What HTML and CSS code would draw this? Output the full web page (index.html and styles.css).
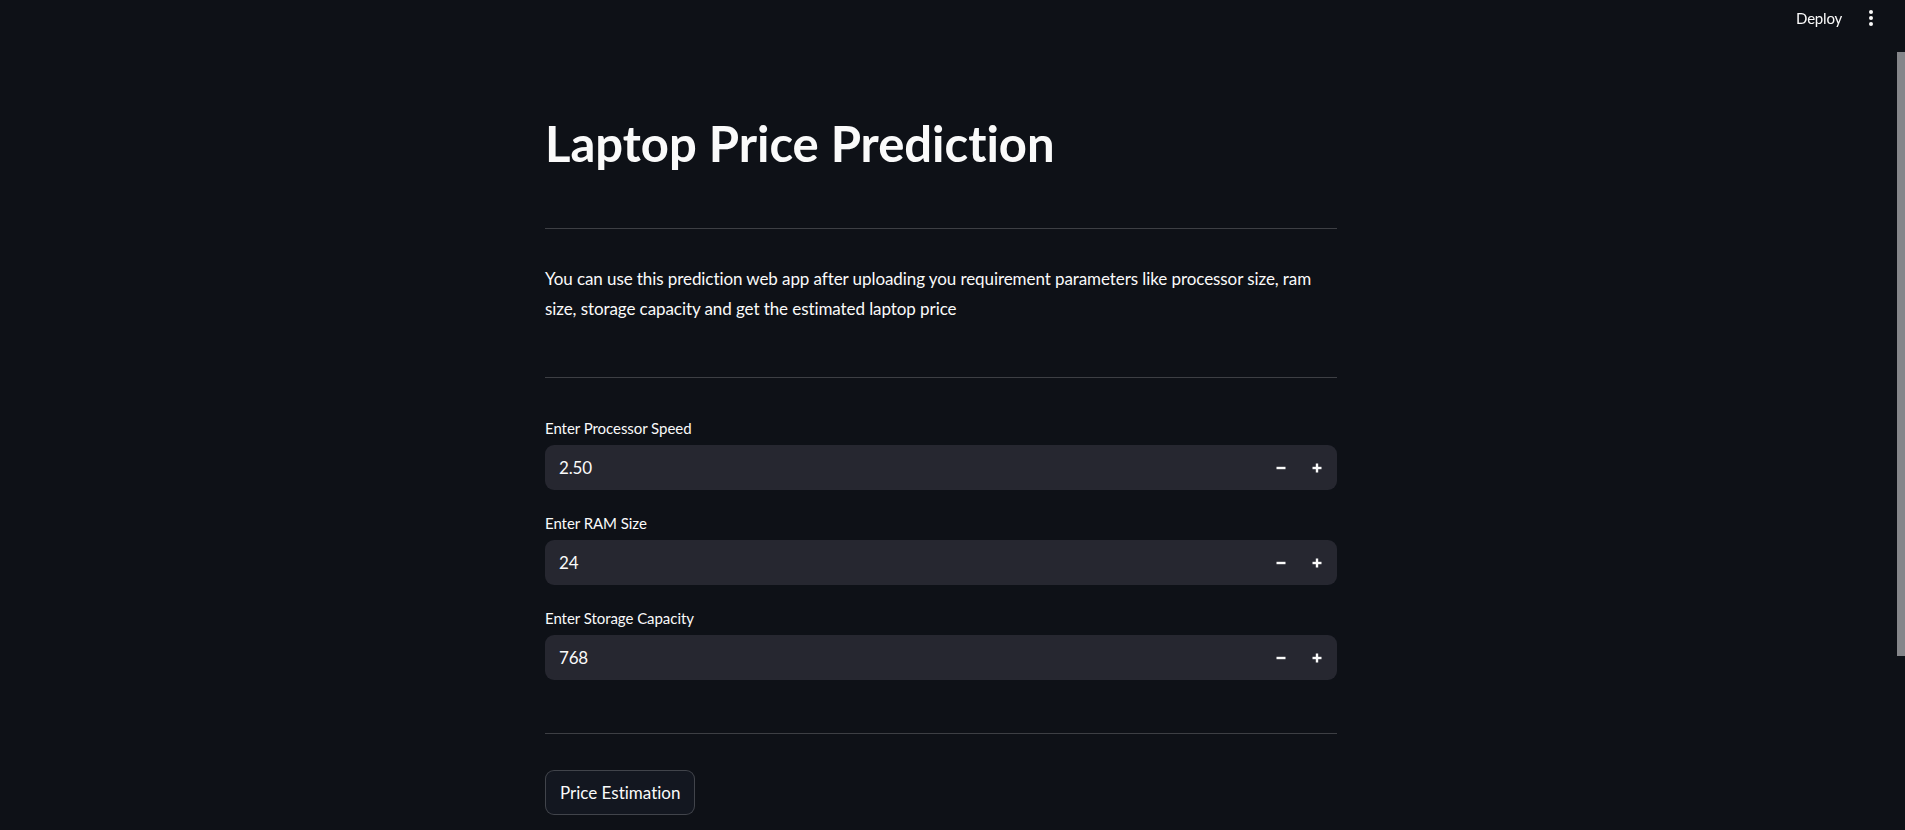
FILE: index.html
```html
<!DOCTYPE html>
<html lang="en">
<head>
<meta charset="utf-8">
<title>Laptop Price Prediction</title>
<link rel="stylesheet" href="styles.css">
</head>
<body>
<div class="app">
  <header class="topbar">
    <span class="deploy">Deploy</span>
    <button class="menu" aria-label="Main menu">
      <svg width="4" height="16" viewBox="0 0 4 16"><circle cx="2" cy="2" r="2" fill="#fafafa"/><circle cx="2" cy="8" r="2" fill="#fafafa"/><circle cx="2" cy="14" r="2" fill="#fafafa"/></svg>
    </button>
  </header>
  <main class="block">
    <h1 class="title">Laptop Price Prediction</h1>
    <hr class="divider d1">
    <p class="intro">You can use this prediction web app after uploading you requirement parameters like processor size, ram size, storage capacity and get the estimated laptop price</p>
    <hr class="divider d2">
    <div class="fields">
      <div class="field">
        <label class="label">Enter Processor Speed</label>
        <div class="numinput">
          <span class="value">2.50</span>
          <button class="step" aria-label="Decrement"><svg width="10" height="10" viewBox="0 0 10 10"><rect x="0.5" y="3.8" width="9" height="2.4" fill="#fafafa"/></svg></button>
          <button class="step" aria-label="Increment"><svg width="10" height="10" viewBox="0 0 10 10"><rect x="0.5" y="3.8" width="9" height="2.4" fill="#fafafa"/><rect x="3.8" y="0.5" width="2.4" height="9" fill="#fafafa"/></svg></button>
        </div>
      </div>
      <div class="field">
        <label class="label">Enter RAM Size</label>
        <div class="numinput">
          <span class="value">24</span>
          <button class="step" aria-label="Decrement"><svg width="10" height="10" viewBox="0 0 10 10"><rect x="0.5" y="3.8" width="9" height="2.4" fill="#fafafa"/></svg></button>
          <button class="step" aria-label="Increment"><svg width="10" height="10" viewBox="0 0 10 10"><rect x="0.5" y="3.8" width="9" height="2.4" fill="#fafafa"/><rect x="3.8" y="0.5" width="2.4" height="9" fill="#fafafa"/></svg></button>
        </div>
      </div>
      <div class="field">
        <label class="label">Enter Storage Capacity</label>
        <div class="numinput">
          <span class="value">768</span>
          <button class="step" aria-label="Decrement"><svg width="10" height="10" viewBox="0 0 10 10"><rect x="0.5" y="3.8" width="9" height="2.4" fill="#fafafa"/></svg></button>
          <button class="step" aria-label="Increment"><svg width="10" height="10" viewBox="0 0 10 10"><rect x="0.5" y="3.8" width="9" height="2.4" fill="#fafafa"/><rect x="3.8" y="0.5" width="2.4" height="9" fill="#fafafa"/></svg></button>
        </div>
      </div>
    </div>
    <hr class="divider d3">
    <button class="primary-btn">Price Estimation</button>
  </main>
  <div class="scroll-thumb"></div>
</div>
</body>
</html>
```
FILE: styles.css
```css
* { box-sizing: border-box; }
html, body {
  margin: 0;
  padding: 0;
  height: 100%;
  background: #0e1117;
  overflow: hidden;
}
body {
  color: #fafafa;
  font-family: Lato, "Noto Sans", sans-serif;
  font-variant-ligatures: none;
}
.app {
  height: 830px;
  overflow-y: auto;
  scrollbar-width: none;
  background: #0e1117;
}
.app::-webkit-scrollbar { display: none; }

.scroll-thumb {
  position: fixed;
  top: 52px;
  right: 0;
  width: 8px;
  height: 604px;
  background: #85868a;
  z-index: 6;
}

.topbar {
  position: fixed;
  top: 0;
  left: 0;
  right: 0;
  height: 36px;
  display: flex;
  justify-content: flex-end;
  align-items: center;
  padding-right: 24px;
  gap: 19px;
  background: transparent;
  z-index: 5;
}
.deploy {
  font-size: 15px;
  line-height: 20px;
  color: #fafafa;
  letter-spacing: -0.2px;
}
.menu {
  width: 20px;
  height: 28px;
  padding: 0;
  border: 0;
  background: transparent;
  display: flex;
  align-items: center;
  justify-content: center;
}

.block {
  width: 815px;
  padding: 113px 23px 254px 0;
  margin: 0 auto;
  display: flex;
  flex-direction: column;
  align-items: stretch;
}
.title {
  margin: 0;
  font-size: 49px;
  line-height: 60px;
  font-weight: 700;
  letter-spacing: 0;
}
.divider {
  margin: 0;
  border: 0;
  height: 1px;
  background: rgba(250, 250, 250, 0.2);
}
.d1 { margin-top: 55px; }
.intro {
  margin: 35px 0 0;
  font-size: 17px;
  line-height: 29.5px;
  letter-spacing: -0.08px;
}
.d2 { margin-top: 54px; }
.fields {
  margin-top: 40px;
  display: flex;
  flex-direction: column;
  gap: 23px;
}
.field {
  display: flex;
  flex-direction: column;
  gap: 6px;
}
.label {
  font-size: 15px;
  line-height: 21px;
  letter-spacing: -0.05px;
}
.numinput {
  height: 45px;
  border-radius: 9px;
  background: #262730;
  display: flex;
  align-items: center;
  padding: 0 2px 0 14px;
}
.value {
  flex: 1;
  font-size: 17px;
  line-height: 45px;
  letter-spacing: -0.2px;
}
.step {
  width: 36px;
  height: 45px;
  padding: 0;
  border: 0;
  background: transparent;
  display: flex;
  align-items: center;
  justify-content: center;
}
.d3 { margin-top: 53px; }
.primary-btn {
  margin-top: 36px;
  align-self: flex-start;
  height: 45px;
  padding: 0 14px;
  border: 1px solid rgba(250, 250, 250, 0.2);
  border-radius: 9px;
  background: #131720;
  color: #fafafa;
  font-family: Lato, "Noto Sans", sans-serif;
  font-variant-ligatures: none;
  font-size: 17px;
  letter-spacing: 0;
}
```
